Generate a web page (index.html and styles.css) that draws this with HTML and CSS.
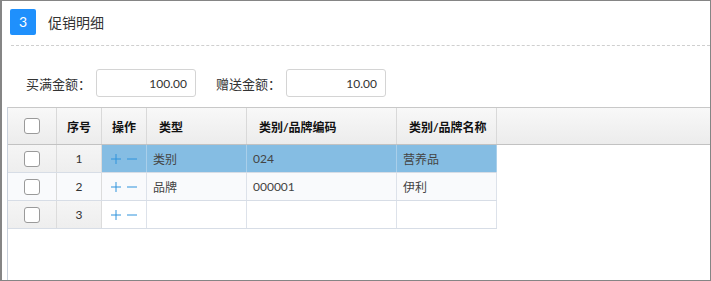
FILE: index.html
```html
<!DOCTYPE html>
<html lang="zh-CN">
<head>
<meta charset="utf-8">
<link rel="stylesheet" href="styles.css">
</head>
<body>
<div class="frame">
  <div class="head">
    <span class="badge">3</span>
    <span class="title">促销明细</span>
  </div>
  <div class="dash"></div>
  <div class="form">
    <label class="lbl">买满金额：</label>
    <div class="inp">100.00</div>
    <label class="lbl lbl2">赠送金额：</label>
    <div class="inp">10.00</div>
  </div>
  <div class="grid">
    <div class="row hdr">
      <div class="c cb"><span class="box"></span></div>
      <div class="c seq">序号</div>
      <div class="c op">操作</div>
      <div class="c t">类型</div>
      <div class="c t">类别/品牌编码</div>
      <div class="c t">类别/品牌名称</div>
      <div class="c fill"></div>
    </div>
    <div class="row body sel">
      <div class="c cb"><span class="box"></span></div>
      <div class="c seq">1</div>
      <div class="c op"><svg width="26" height="10" viewBox="0 0 26 10"><path d="M0 5h10M5 0v10M16 5h10" stroke="#2f93dc" stroke-width="1" fill="none"/></svg></div>
      <div class="c d">类别</div>
      <div class="c d">024</div>
      <div class="c d">营养品</div>
    </div>
    <div class="row body alt">
      <div class="c cb"><span class="box"></span></div>
      <div class="c seq">2</div>
      <div class="c op"><svg width="26" height="10" viewBox="0 0 26 10"><path d="M0 5h10M5 0v10M16 5h10" stroke="#2f93dc" stroke-width="1" fill="none"/></svg></div>
      <div class="c d">品牌</div>
      <div class="c d">000001</div>
      <div class="c d">伊利</div>
    </div>
    <div class="row body">
      <div class="c cb"><span class="box"></span></div>
      <div class="c seq">3</div>
      <div class="c op"><svg width="26" height="10" viewBox="0 0 26 10"><path d="M0 5h10M5 0v10M16 5h10" stroke="#2f93dc" stroke-width="1" fill="none"/></svg></div>
      <div class="c d"></div>
      <div class="c d"></div>
      <div class="c d"></div>
    </div>
  </div>
</div>
</body>
</html>
```
FILE: styles.css
```css
* { box-sizing: border-box; }
html, body { margin: 0; padding: 0; background: #fff; }
body { font-family: Lato, "Noto Sans CJK SC", sans-serif; color: #333; }
.frame {
  width: 711px; height: 281px;
  border: 1px solid #858585; border-left-width: 2px;
  display: flex; flex-direction: column;
  overflow: hidden;
}
.head { display: flex; align-items: center; padding: 7px 0 0 8px; height: 34px; }
.badge {
  width: 26px; height: 26px; border-radius: 2px;
  background: #1f90fc; color: #fff;
  display: flex; align-items: center; justify-content: center;
  font-size: 14px;
}
.title { margin-left: 12px; font-size: 14px; color: #333; }
.dash { margin: 10px 0 0 9px; border-top: 1px dashed #cfcfcf; }
.form { display: flex; align-items: center; margin: 23px 0 0 24px; height: 28px; }
.lbl { font-size: 13px; color: #333; width: 70px; }
.lbl2 { margin-left: 20px; }
.inp {
  width: 100px; height: 28px; border: 1px solid #d4d4d4; border-radius: 3px;
  display: flex; align-items: center; justify-content: flex-end;
  padding-right: 8px; font-size: 12px; color: #333;
}
.grid {
  margin: 10px 0 0 5px; flex: 1;
  border-left: 1px solid #c9d1dc;
}
.row { display: grid; grid-template-columns: 49px 45px 45px 100px 150px 100px; }
.hdr {
  grid-template-columns: 49px 45px 45px 100px 150px 100px 1fr;
  height: 38px;
  border-top: 1px solid #c8c8c8; border-bottom: 1px solid #c2c2c2;
  background: linear-gradient(#f8f8f8, #ececec);
  font-weight: bold; font-size: 12px; color: #111;
}
.hdr .c { border-right: 1px solid #d9d9d9; display: flex; align-items: center; }
.hdr .fill { border-right: 0; }
.c.cb { justify-content: center; display: flex; align-items: center; }
.box {
  width: 16px; height: 16px; border: 1px solid #9a9a9a; border-radius: 3px; background: #fff;
}
.hdr .seq, .hdr .op { justify-content: center; }
.hdr .t { padding-left: 12px; }
.body { height: 28px; width: 489px; border-bottom: 1px solid #d7dde6; font-size: 12px; }
.body .c { border-right: 1px solid #dde2ea; display: flex; align-items: center; }
.body .cb, .body .seq { background: linear-gradient(#f5f5f5, #eeeeee); border-right-color: #dcdcdc; }
.body .seq { justify-content: center; color: #333; }
.body .op { padding-left: 9px; }
.body .d { padding-left: 6px; color: #444; }
.alt .c { background: #f9fafc; }
.sel .op, .sel .d { background: #85bde3; border-right-color: #a9cfea; }
```
